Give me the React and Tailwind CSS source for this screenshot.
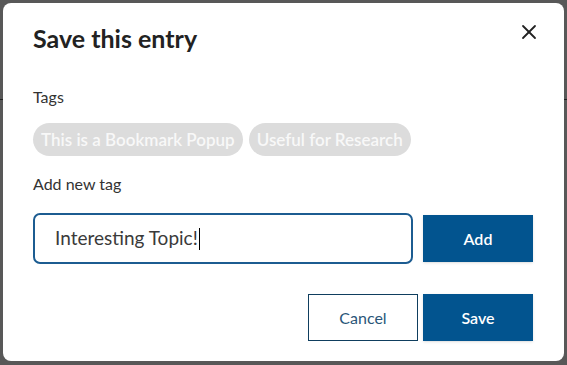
import { X } from 'lucide-react';

const font = { fontFamily: 'Lato, "Noto Sans", sans-serif' };

const Chip = ({ label }) => (
  <span className="inline-flex h-[33px] items-center rounded-full bg-[#dcdcdc] px-[8px] text-[17px] font-semibold text-[#f8f8f8]">
    {label}
  </span>
);

export default function App() {
  return (
    <div className="relative flex h-[365px] w-[567px] bg-[#585858] p-[3px] pr-[4px] pb-[4px]" style={font}>
      {/* bits of the page behind the backdrop */}
      <div className="absolute left-0 top-[99px] h-px w-[4px] bg-[#222]" />
      <div className="absolute right-0 top-[99px] h-px w-[4px] bg-[#222]" />

      <div className="relative flex flex-1 flex-col rounded-[8px] bg-white pl-[30px] pr-[31px] pt-[20px]">
        <button className="absolute right-[23px] top-[17px] text-[#222]">
          <X size={24} strokeWidth={1.8} />
        </button>

        <h2 className="text-[25px] font-bold leading-[30px] text-[#222]">Save this entry</h2>

        <p className="mt-[34px] text-[16px] leading-[20px] text-[#333]">Tags</p>
        <div className="mt-[16px] flex gap-[6px]">
          <Chip label="This is a Bookmark Popup" />
          <Chip label="Useful for Research" />
        </div>

        <p className="mt-[18px] text-[16px] leading-[20px] text-[#333]">Add new tag</p>
        <div className="mt-[19px] flex items-center gap-[10px]">
          <div className="flex h-[51px] w-[380px] items-center rounded-[7px] border-2 border-[#1c5c91] pl-[20px] text-[19px] text-[#3a3a3a]">
            Interesting Topic!
            <span className="ml-px h-[22px] w-px bg-black" />
          </div>
          <button className="h-[47px] w-[110px] bg-[#02548f] text-[16px] font-semibold text-white shadow-sm">
            Add
          </button>
        </div>

        <div className="mt-[30px] flex justify-end gap-[5px]">
          <button className="h-[47px] w-[110px] border border-[#0f3e5e] bg-white text-[16px] text-[#2a5678]">
            Cancel
          </button>
          <button className="h-[47px] w-[110px] bg-[#02548f] text-[16px] font-semibold text-white shadow-sm">
            Save
          </button>
        </div>
      </div>
    </div>
  );
}
